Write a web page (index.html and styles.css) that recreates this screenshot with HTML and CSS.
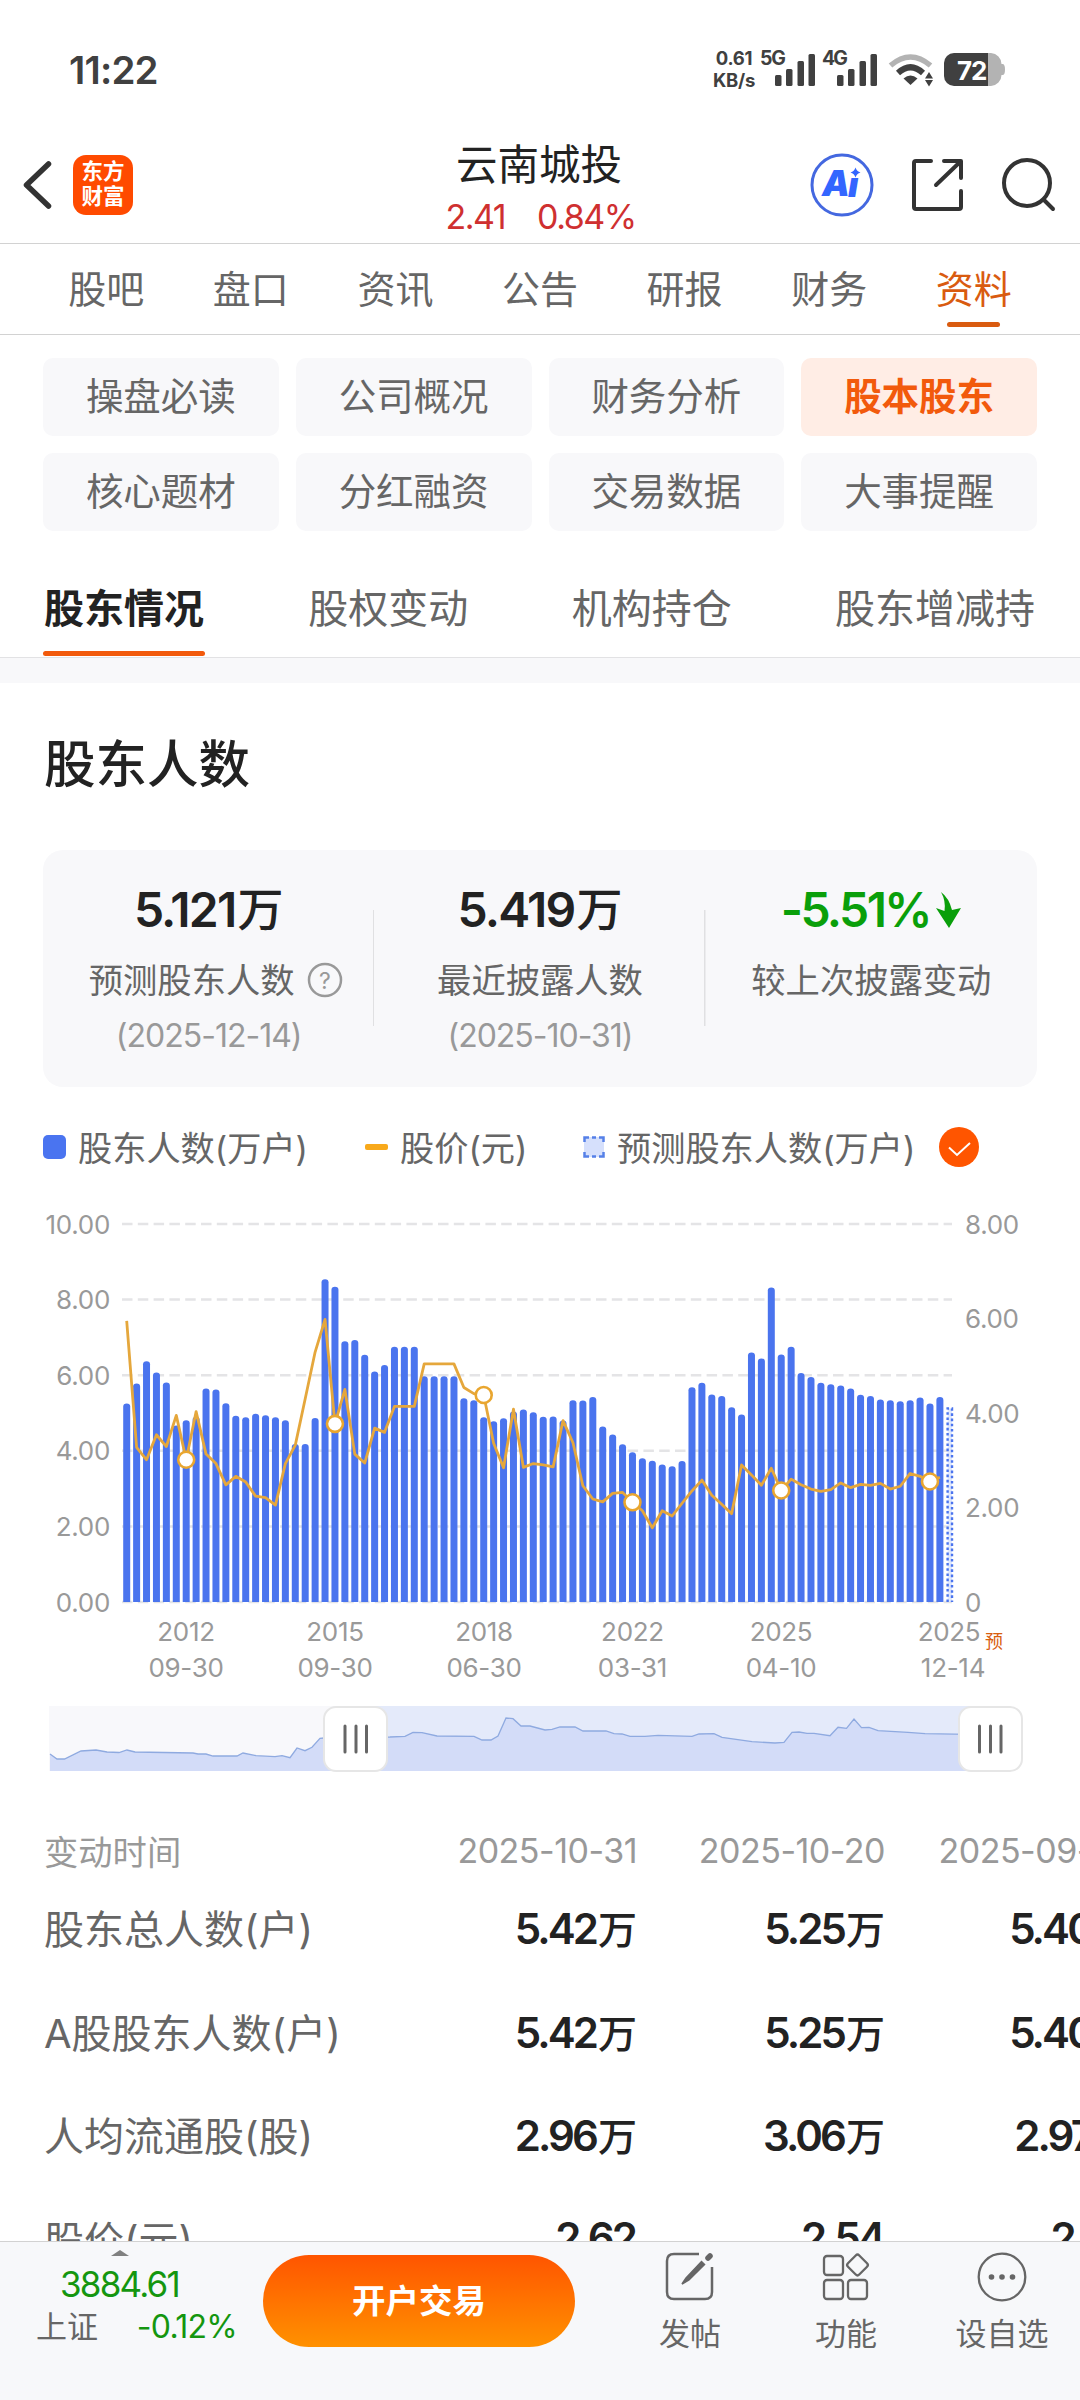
FILE: index.html
```
<!DOCTYPE html>
<html lang="zh-CN">
<head>
    <meta charset="UTF-8">
    <meta name="viewport" content="width=device-width, initial-scale=1.0">
    <title>云南城投 - 股东人数</title>
    <link rel="stylesheet" href="styles.css">
</head>
<body>

<div class="status-bar">
    <span class="clock">11:22</span>
    <div class="status-icons">
        <div class="speed"><span>0.61</span><span>KB/s</span></div>
        <svg width="248" height="40" viewBox="758 50 248 40">
            <g fill="#404040">
                <text class="net" x="760" y="65" textLength="26">5G</text>
                <rect x="775" y="75" width="6.5" height="11" rx="1.5"/>
                <rect x="786" y="69" width="6.5" height="17" rx="1.5"/>
                <rect x="797.5" y="61" width="6.5" height="25" rx="1.5"/>
                <rect x="808.5" y="54" width="6.5" height="32" rx="1.5"/>
                <text class="net" x="822" y="65" textLength="26">4G</text>
                <rect x="837" y="75" width="6.5" height="11" rx="1.5"/>
                <rect x="848" y="69" width="6.5" height="17" rx="1.5"/>
                <rect x="859.5" y="61" width="6.5" height="25" rx="1.5"/>
                <rect x="870.5" y="54" width="6.5" height="32" rx="1.5"/>
                <path d="M903.5 78.500Q910.500 72.500 917.500 78.500L910.500 85Z"/>
                <path d="M925 78.500l4-6.500 4 6.500zM925 80h8l-4 6.500z"/>
            </g>
            <path d="M890.500 65.500Q910.500 48.500 930.500 65.500" fill="none" stroke="#b3b3b3" stroke-width="5.500"/>
            <path d="M898 73Q910.500 61.500 923 73" fill="none" stroke="#404040" stroke-width="6"/>
            <path d="M988 53h3a11 11 0 0 1 10.500 11h1q2.500 0 2.500 5.500t-2.500 5.500h-1a11 11 0 0 1-10.500 11h-3z" fill="#b3b3b3"/>
            <path d="M954 53h34v33h-34a10 10 0 0 1-10-10v-13a10 10 0 0 1 10-10z" fill="#404040"/>
            <text class="battery" x="957" y="80" fill="#fff">72</text>
        </svg>
    </div>
</div>

<header class="header">
    <div class="header-left">
        <svg width="30" height="50" viewBox="0 0 30 50"><path d="M26.500 4L4.500 25L26.500 46" fill="none" stroke="#333" stroke-width="5.500" stroke-linecap="round" stroke-linejoin="round"/></svg>
        <div class="logo">东方<br>财富</div>
    </div>
    <div class="stock">
        <div class="stock-name">云南城投</div>
        <div class="stock-quote"><span>2.41</span><span>0.84%</span></div>
    </div>
    <div class="header-right">
        <svg width="64" height="64" viewBox="0 0 64 64">
            <circle cx="32" cy="32" r="30" fill="none" stroke="#4468e0" stroke-width="3"/>
            <text class="ai" x="12" y="43">A</text>
            <text class="ai" x="38" y="43.500">ı</text>
            <path d="M45.500 14.500q1.200 4 5 5q-3.800 1-5 5q-1.200-4-5-5q3.800-1 5-5z" fill="#3366ff"/>
        </svg>
        <svg width="54" height="54" viewBox="0 0 54 54" fill="none" stroke="#333" stroke-width="4" stroke-linecap="round" stroke-linejoin="round">
            <path d="M20 3H5Q3 3 3 5V49Q3 51 5 51H48Q50 51 50 49V33"/>
            <path d="M33 3H50V20M49 4L25 27"/>
        </svg>
        <svg width="54" height="54" viewBox="0 0 54 54" fill="none" stroke="#333" stroke-width="4" stroke-linecap="round">
            <circle cx="25" cy="25" r="23"/>
            <path d="M42 42L51 51"/>
        </svg>
    </div>
</header>

<nav class="tabs">
    <span>股吧</span>
    <span>盘口</span>
    <span>资讯</span>
    <span>公告</span>
    <span>研报</span>
    <span>财务</span>
    <span class="active">资料</span>
</nav>

<div class="chips">
    <span>操盘必读</span>
    <span>公司概况</span>
    <span>财务分析</span>
    <span class="active">股本股东</span>
    <span>核心题材</span>
    <span>分红融资</span>
    <span>交易数据</span>
    <span>大事提醒</span>
</div>

<nav class="subtabs">
    <span class="active">股东情况</span>
    <span>股权变动</span>
    <span>机构持仓</span>
    <span>股东增减持</span>
</nav>

<main class="content">
    <h2 class="section-title">股东人数</h2>

    <div class="summary">
        <div class="summary-item">
            <div class="summary-value"><span class="num">5.121</span>万</div>
            <div class="summary-label with-help"><span>预测股东人数</span>
                <svg width="36" height="36" viewBox="0 0 36 36"><circle cx="18" cy="18" r="16" fill="none" stroke="#999" stroke-width="2.500"/><text class="help" x="18" y="26.500" text-anchor="middle">?</text></svg>
            </div>
            <div class="summary-date">(2025-12-14)</div>
        </div>
        <div class="summary-item">
            <div class="summary-value"><span class="num">5.419</span>万</div>
            <div class="summary-label"><span>最近披露人数</span></div>
            <div class="summary-date">(2025-10-31)</div>
        </div>
        <div class="summary-item">
            <div class="summary-value down"><span class="num">-5.51%</span>
                <svg width="27" height="36" viewBox="0 0 27 36"><path d="M6 0Q14 6 17 18L26 16L14 36L1 16L9.500 19Q11 9 6 0Z" fill="#0a9f0a"/></svg>
            </div>
            <div class="summary-label"><span>较上次披露变动</span></div>
        </div>
    </div>

    <div class="legend">
        <i class="key-bar"></i><span class="legend-holders">股东人数(万户)</span>
        <i class="key-line"></i><span class="legend-price">股价(元)</span>
        <svg class="key-forecast" width="22" height="22" viewBox="0 0 22 22">
            <rect x="1" y="1" width="20" height="20" fill="#d6e0fc"/>
            <path d="M1.500 6V1.500H6M16 1.500H20.500V6M20.500 16V20.500H16M6 20.500H1.500V16M9 1.500H13M9 20.500H13" fill="none" stroke="#5580e8" stroke-width="2.500"/>
        </svg>
        <span class="legend-forecast">预测股东人数(万户)</span>
        <svg width="40" height="40" viewBox="0 0 40 40"><circle cx="20" cy="20" r="20" fill="#ff5500"/><path d="M10 20.500L18 28L31 16" fill="none" stroke="#fff" stroke-width="2"/></svg>
    </div>

    <svg class="chart" id="chart" width="1080" height="500" viewBox="0 1200 1080 500"></svg>

    <div class="range">
        <svg width="974" height="67" viewBox="0 0 974 67">
            <rect x="0" y="0" width="307" height="65" fill="#f8f8fb"/>
            <rect x="307" y="0" width="635" height="65" fill="#e4eafa"/>
            <path id="rangeArea" fill="#d3dcf8"/>
            <path id="rangeLine" fill="none" stroke="#8faae0" stroke-width="1.300"/>
            <g fill="#fff" stroke="#e6e6e6" stroke-width="2">
                <rect x="275" y="1" width="63" height="64" rx="12"/>
                <rect x="910" y="1" width="63" height="64" rx="12"/>
            </g>
            <path d="M296 20V46M307 20V46M317.500 20V46M930.500 20V46M941.500 20V46M952 20V46" stroke="#666" stroke-width="3" stroke-linecap="round"/>
        </svg>
    </div>

    <div class="table">
        <div class="row head"><span class="name">变动时间</span><span>2025-10-31</span><span>2025-10-20</span><span>2025-09-30</span></div>
        <div class="row"><span class="name">股东总人数(户)</span><span><b>5.42</b>万</span><span><b>5.25</b>万</span><span><b>5.40</b>万</span></div>
        <div class="row"><span class="name">A股股东人数(户)</span><span><b>5.42</b>万</span><span><b>5.25</b>万</span><span><b>5.40</b>万</span></div>
        <div class="row"><span class="name">人均流通股(股)</span><span><b>2.96</b>万</span><span><b>3.06</b>万</span><span><b>2.97</b>万</span></div>
        <div class="row"><span class="name">股价(元)</span><span><b>2.62</b></span><span><b>2.54</b></span><span><b>2.66</b></span></div>
    </div>
</main>

<footer class="bottom-bar">
    <div class="index">
        <i class="arrow-up"></i>
        <div class="index-value">3884.61</div>
        <div class="index-row"><span>上证</span><span class="index-change">-0.12%</span></div>
    </div>
    <div class="trade-btn">开户交易</div>
    <div class="action">
        <svg width="50" height="50" viewBox="0 0 50 50" fill="none" stroke="#666" stroke-width="2.500">
            <path d="M34 2H9Q2 2 2 9V40Q2 47 9 47H40Q47 47 47 40V15"/>
            <path d="M21 26L36.500 9.500L39.500 12.500L24 28L17 32Z" fill="#666" stroke-width="1.500"/>
            <path d="M43 6L45 4" stroke-width="5.500" stroke-linecap="round"/>
        </svg>
        <span>发帖</span>
    </div>
    <div class="action">
        <svg width="50" height="50" viewBox="0 0 50 50" fill="none" stroke="#666" stroke-width="2.300">
            <rect x="3" y="4" width="19" height="19" rx="3"/>
            <rect x="3" y="28" width="19" height="19" rx="3"/>
            <rect x="27" y="28" width="19" height="19" rx="3"/>
            <rect x="28.500" y="5" width="16" height="16" rx="2.500" transform="rotate(45 36.500 13)"/>
        </svg>
        <span>功能</span>
    </div>
    <div class="action">
        <svg width="50" height="50" viewBox="0 0 50 50">
            <circle cx="25" cy="25" r="23.300" fill="none" stroke="#666" stroke-width="2.300"/>
            <circle cx="14.500" cy="25" r="2.800" fill="#666"/><circle cx="25" cy="25" r="2.800" fill="#666"/><circle cx="35.500" cy="25" r="2.800" fill="#666"/>
        </svg>
        <span>设自选</span>
    </div>
</footer>

<script src="chart.js"></script>
</body>
</html>
```
FILE: styles.css
```
* {
    box-sizing: border-box;
}
body {
    font-family: Inter, "Noto Sans CJK SC", sans-serif;
    margin: 0;
    width: 1080px;
    height: 2400px;
    overflow: hidden;
    display: flex;
    flex-direction: column;
    background-color: #fff;
    color: #666;
}
svg {
    display: block;
    flex: none;
    overflow: visible;
}

/* status bar */
.status-bar {
    height: 130px;
    flex: none;
    padding: 10px 74px 0 69px;
    display: flex;
    justify-content: space-between;
    align-items: center;
    color: #404040;
}
.clock {
    font-size: 38.5px;
    font-weight: 600;
    letter-spacing: -0.8px;
}
.status-icons {
    display: flex;
    align-items: center;
    gap: 3px;
}
.speed {
    display: flex;
    flex-direction: column;
    align-items: center;
    font-size: 18.5px;
    font-weight: 700;
    line-height: 22px;
    letter-spacing: -0.3px;
    padding-bottom: 2px;
}
.net {
    font-size: 19.5px;
    font-weight: 700;
}
.battery {
    font-size: 26px;
    font-weight: 700;
    letter-spacing: -1px;
}

/* header */
.header {
    height: 114px;
    flex: none;
    padding: 0 24px 0 22px;
    display: flex;
    justify-content: space-between;
    align-items: center;
    border-bottom: 1px solid #d2d2d2;
}
.header-left, .header-right {
    width: 246px;
    padding-bottom: 3px;
    display: flex;
    align-items: center;
}
.header-left {
    gap: 21px;
}
.header-right {
    justify-content: space-between;
}
.logo {
    width: 60px;
    height: 60px;
    border-radius: 13px;
    background-color: #ff4a00;
    color: #fff;
    font-size: 21.5px;
    font-weight: 700;
    line-height: 25px;
    text-align: center;
    padding-top: 4px;
}
.stock {
    padding-top: 6px;
    text-align: center;
}
.stock-name {
    font-size: 41.5px;
    line-height: 54px;
    color: #222;
}
.stock-quote {
    display: flex;
    gap: 32px;
    justify-content: center;
    padding-left: 3px;
    font-size: 34px;
    line-height: 50px;
    letter-spacing: -1.5px;
    color: #cf3030;
}
.ai {
    font-size: 35px;
    font-weight: 900;
    font-style: italic;
    fill: #3366ff;
}

/* main tabs */
.tabs {
    height: 91px;
    flex: none;
    padding: 0 34px;
    display: flex;
    border-bottom: 1px solid #d2d2d2;
    font-size: 38px;
    line-height: 90px;
}
.tabs span {
    flex: 1;
    display: flex;
    flex-direction: column;
    align-items: center;
}
.tabs .active {
    color: #d95b10;
}
.tabs .active::after {
    content: "";
    width: 53px;
    height: 5px;
    margin-top: -12px;
    border-radius: 3px;
    background-color: #d95b10;
}

/* category chips */
.chips {
    flex: none;
    padding: 23px 43px 0;
    display: grid;
    grid-template-columns: repeat(4, 1fr);
    gap: 17px;
}
.chips span {
    height: 78px;
    line-height: 77px;
    border-radius: 10px;
    background-color: #f8f8fa;
    text-align: center;
    font-size: 37.5px;
}
.chips .active {
    background-color: #ffede5;
    color: #f25a0c;
    font-weight: 700;
}

/* second level tabs */
.subtabs {
    height: 127px;
    flex: none;
    padding: 34px 45px 0 43px;
    display: flex;
    justify-content: space-between;
    border-bottom: 1px solid #e2e2e4;
    font-size: 40px;
    line-height: 88px;
}
.subtabs .active {
    color: #222;
    font-weight: 700;
    display: flex;
    flex-direction: column;
    padding: 0 1px;
}
.subtabs .active::after {
    content: "";
    height: 5px;
    margin: -2px -1px 0;
    border-radius: 3px;
    background-color: #f25a0c;
}

.content {
    flex: 1;
    min-height: 0;
    overflow: hidden;
    border-top: 25px solid #f8f8fa;
}
.section-title {
    margin: 43px 0 0 44px;
    font-size: 51.5px;
    font-weight: 500;
    line-height: 76px;
    color: #222;
}

/* summary card */
.summary {
    margin: 48px 43px 0;
    height: 237px;
    padding-top: 26px;
    border-radius: 20px;
    background-color: #f8f8fa;
    display: grid;
    grid-template-columns: repeat(3, 1fr);
}
.summary-item {
    display: flex;
    flex-direction: column;
    align-items: center;
    background: linear-gradient(#e0e0e2, #e0e0e2) no-repeat right 34px / 1.5px 116px;
}
.summary-item:last-child {
    background: none;
}
.summary-value {
    display: flex;
    align-items: center;
    height: 67px;
    font-size: 46px;
    line-height: 67px;
    font-weight: 500;
    color: #222;
}
.summary-value .num {
    font-size: 48px;
    font-weight: 600;
    letter-spacing: -1.8px;
    margin-right: 2px;
}
.summary-value.down {
    color: #0a9f0a;
}
.summary-value.down .num {
    letter-spacing: -2.6px;
}
.summary-value svg {
    margin-left: 3px;
}
.summary-label {
    margin-top: 8px;
    height: 58px;
    display: flex;
    align-items: center;
    font-size: 34.3px;
    white-space: nowrap;
}
.summary-label span {
    padding-bottom: 5px;
}
.with-help {
    gap: 12px;
    margin-left: 14px;
}
.help {
    font-size: 23px;
    fill: #999;
}
.summary-date {
    height: 54px;
    line-height: 54px;
    font-size: 32px;
    letter-spacing: -1px;
    color: #999;
}

/* chart */
.legend {
    height: 120px;
    padding-left: 43px;
    display: flex;
    align-items: center;
    font-size: 34.2px;
    white-space: nowrap;
}
.legend span {
    padding-bottom: 3px;
}
.key-bar {
    width: 23px;
    height: 24px;
    border-radius: 5px;
    background-color: #4a74f0;
    margin-right: 12px;
}
.key-line {
    width: 23px;
    height: 6px;
    border-radius: 2px;
    background-color: #f8a91b;
    margin-right: 12px;
}
.key-forecast {
    margin-right: 12px;
}
.legend-holders {
    width: 287px;
}
.legend-price {
    width: 183px;
}
.legend-forecast {
    width: 322px;
}
.axis {
    font-size: 26px;
    letter-spacing: -0.3px;
    fill: #999;
}
.forecast-mark {
    font-size: 18px;
    fill: #d9600f;
}
.chart {
    margin-top: -7px;
}
.range {
    margin: 6px 0 0 49px;
}

/* holder table */
.table {
    margin-top: 37px;
    width: 1131px;
    padding-left: 43px;
}
.row {
    height: 103.7px;
    display: grid;
    grid-template-columns: 346px 248px 248px 248px;
    align-items: center;
    text-align: right;
    font-size: 39px;
    font-weight: 500;
    color: #222;
    white-space: nowrap;
}
.row .name {
    text-align: left;
    padding-left: 1px;
    font-size: 40px;
    font-weight: 400;
    color: #666;
}
.row b {
    font-size: 42px;
    font-weight: 600;
    letter-spacing: -2.9px;
    margin-right: 2px;
}
.row.head {
    height: 80px;
    font-size: 34px;
    font-weight: 400;
    letter-spacing: -0.5px;
    color: #999;
    margin-bottom: -15px;
}
.row.head .name {
    font-size: 34.3px;
    letter-spacing: 0;
    color: #999;
}

/* bottom bar */
.bottom-bar {
    height: 159px;
    flex: none;
    border-top: 1px solid #d2d2d2;
    background-color: #f7f8fa;
    display: flex;
    align-items: flex-start;
}
.index {
    width: 263px;
    padding: 8px 26px 0 36px;
    display: flex;
    flex-direction: column;
}
.arrow-up {
    margin-left: 75px;
    width: 0;
    border: 9.5px solid transparent;
    border-top: 0;
    border-bottom: 6px solid #808080;
}
.index-value {
    margin: 6px 0 0 24px;
    font-size: 35px;
    line-height: 44px;
    letter-spacing: -1.8px;
    color: #14960f;
}
.index-row {
    display: flex;
    justify-content: space-between;
    line-height: 42px;
    font-size: 31px;
}
.index-change {
    font-size: 32px;
    letter-spacing: -0.7px;
    color: #14960f;
}
.trade-btn {
    width: 312px;
    height: 92px;
    margin: 13px 37px 0 0;
    border-radius: 46px;
    background: linear-gradient(#ff5500, #ff9100);
    color: #fff;
    font-size: 33.5px;
    font-weight: 700;
    line-height: 92px;
    text-align: center;
}
.action {
    width: 156px;
    padding-top: 10px;
    display: flex;
    flex-direction: column;
    align-items: center;
    gap: 9px;
    font-size: 31px;
    line-height: 46px;
}
```
FILE: chart.js
```
const holders = [
    5.25, 5.78, 6.37, 6.07, 5.81, 4.67, 4.81, 4.90, 5.65, 5.62, 5.26, 4.93, 4.89, 4.98, 4.94, 4.89, 4.81,
    4.18, 4.18, 4.87, 8.54, 8.34, 6.90, 6.93, 6.54, 6.10, 6.27, 6.75, 6.75, 6.75, 5.97, 5.97, 5.97, 5.97,
    5.39, 5.34, 4.89, 4.78, 4.86, 5.04, 5.09, 5.02, 4.90, 4.91, 4.80, 5.34, 5.33, 5.42, 4.64, 4.43, 4.17,
    3.96, 3.80, 3.74, 3.64, 3.59, 3.73, 5.68, 5.80, 5.49, 5.45, 5.15, 4.96, 6.60, 6.44, 8.32, 6.55, 6.75,
    6.06, 5.95, 5.80, 5.76, 5.73, 5.65, 5.48, 5.45, 5.36, 5.34, 5.31, 5.34, 5.41, 5.25, 5.42
];
const prices = [
    5.95, 3.27, 3.01, 3.54, 3.29, 3.95, 3.01, 4.03, 3.13, 2.93, 2.48, 2.66, 2.54, 2.24, 2.21, 2.05, 2.93,
    3.32, 4.30, 5.29, 5.98, 3.77, 4.50, 3.13, 2.94, 3.68, 3.59, 4.14, 4.14, 4.14, 5.04, 5.04, 5.04, 5.04,
    4.54, 4.41, 4.38, 3.36, 2.84, 4.08, 2.85, 2.93, 2.90, 2.86, 3.84, 3.37, 2.46, 2.18, 2.12, 2.30, 2.32,
    2.11, 1.93, 1.57, 1.93, 1.82, 2.09, 2.35, 2.58, 2.26, 2.07, 1.87, 2.90, 2.69, 2.47, 2.83, 2.36, 2.60,
    2.48, 2.39, 2.34, 2.38, 2.52, 2.42, 2.49, 2.47, 2.51, 2.39, 2.45, 2.72, 2.66, 2.55, 2.64
];
const forecast = 5.12;
const markers = [6, 21, 36, 51, 66, 81];
const dates = [
    [186, '2012', '09-30'], [335, '2015', '09-30'], [484, '2018', '06-30'],
    [632.5, '2022', '03-31'], [781, '2025', '04-10']
];

const top0 = 1224, bottom = 1602;
const xAt = i => 126.7 + i * 9.917;
const yHolders = v => bottom - v * (bottom - top0) / 10;
const yPrice = v => bottom - v * (bottom - top0) / 8;

let out = '';

// grid lines and left axis
for (let v = 0; v <= 10; v += 2) {
    const y = yHolders(v);
    out += `<path d="M122 ${y}H952" stroke="#e4e4e6" stroke-width="2.500" stroke-dasharray="10.500 5.300"/>`;
    out += `<text class="axis" x="110" y="${y + 9.5}" text-anchor="end">${v.toFixed(2)}</text>`;
}
// right axis
for (let v = 0; v <= 8; v += 2) {
    out += `<text class="axis" x="965" y="${yPrice(v) + 9.5}">${v ? v.toFixed(2) : 0}</text>`;
}
// bars
holders.forEach((v, i) => {
    const x = xAt(i) - 3.5, y = yHolders(v);
    out += `<path d="M${x} ${bottom}V${y + 3}q0 -3 3.500 -3t3.500 3V${bottom}z" fill="#4a74ee"/>`;
});
// forecast bar
const fx = xAt(holders.length), fy = yHolders(forecast);
out += `<path d="M${fx - 2.2} ${bottom}V${fy}H${fx + 2.2}V${bottom}" fill="#e0e8fd" stroke="#4a74ee" stroke-width="2.400" stroke-dasharray="2.600 2.600"/>`;
// price line
out += `<polyline points="${prices.map((v, i) => xAt(i) + ',' + yPrice(v)).join(' ')}" fill="none" stroke="#e5a73c" stroke-width="2.800" stroke-linejoin="round"/>`;
markers.forEach(i => {
    out += `<circle cx="${xAt(i)}" cy="${yPrice(prices[i])}" r="8" fill="#fff" stroke="#e9a62f" stroke-width="2.600"/>`;
});
// dates
dates.forEach(([x, year, day]) => {
    out += `<text class="axis" x="${x}" y="1641" text-anchor="middle">${year}</text>`;
    out += `<text class="axis" x="${x}" y="1677" text-anchor="middle">${day}</text>`;
});
out += `<text class="axis" x="949" y="1641" text-anchor="middle">2025</text>`;
out += `<text class="axis" x="953" y="1677" text-anchor="middle">12-14</text>`;
out += `<text class="forecast-mark" x="985" y="1648">预</text>`;
document.getElementById('chart').innerHTML = out;

// range slider preview
const preview = [
    [1, 48], [8, 53], [15.5, 53], [32, 45], [47, 44], [58, 46], [70, 46.5], [78, 44], [86, 46], [144, 47],
    [149, 48], [157, 48], [164, 50], [188, 50], [194, 47], [207, 49.7], [226, 50.7], [233, 49.7], [241, 51.7],
    [248, 42], [256, 44.7], [263, 41.3], [271, 32.3], [275, 32], [341, 31], [356, 30.3], [364, 26.3],
    [373, 26.7], [388, 30], [425, 30.3], [433, 34], [442, 34], [449, 30], [457, 12], [464, 12.7], [472, 20],
    [481, 20], [496, 24], [503, 23.3], [511, 21], [526, 21], [534, 25], [557, 25], [565, 27.7], [573, 28],
    [581, 30.3], [596, 30.3], [609, 29.3], [643, 30.3], [650, 28], [665, 27.7], [673, 31.3], [703, 35.7],
    [726, 37], [735, 36.3], [743, 26.3], [750, 26], [758, 27.3], [765, 27.3], [781, 29.7], [789, 21.3],
    [797.5, 22.3], [805, 13], [812.5, 21.7], [820, 21.3], [829, 24.7], [859, 26.3], [876, 27.7], [920, 28.3]
];
const line = 'M' + preview.map(p => p.join(' ')).join('L');
document.getElementById('rangeLine').setAttribute('d', line);
document.getElementById('rangeArea').setAttribute('d', line + 'V65H1Z');
```
